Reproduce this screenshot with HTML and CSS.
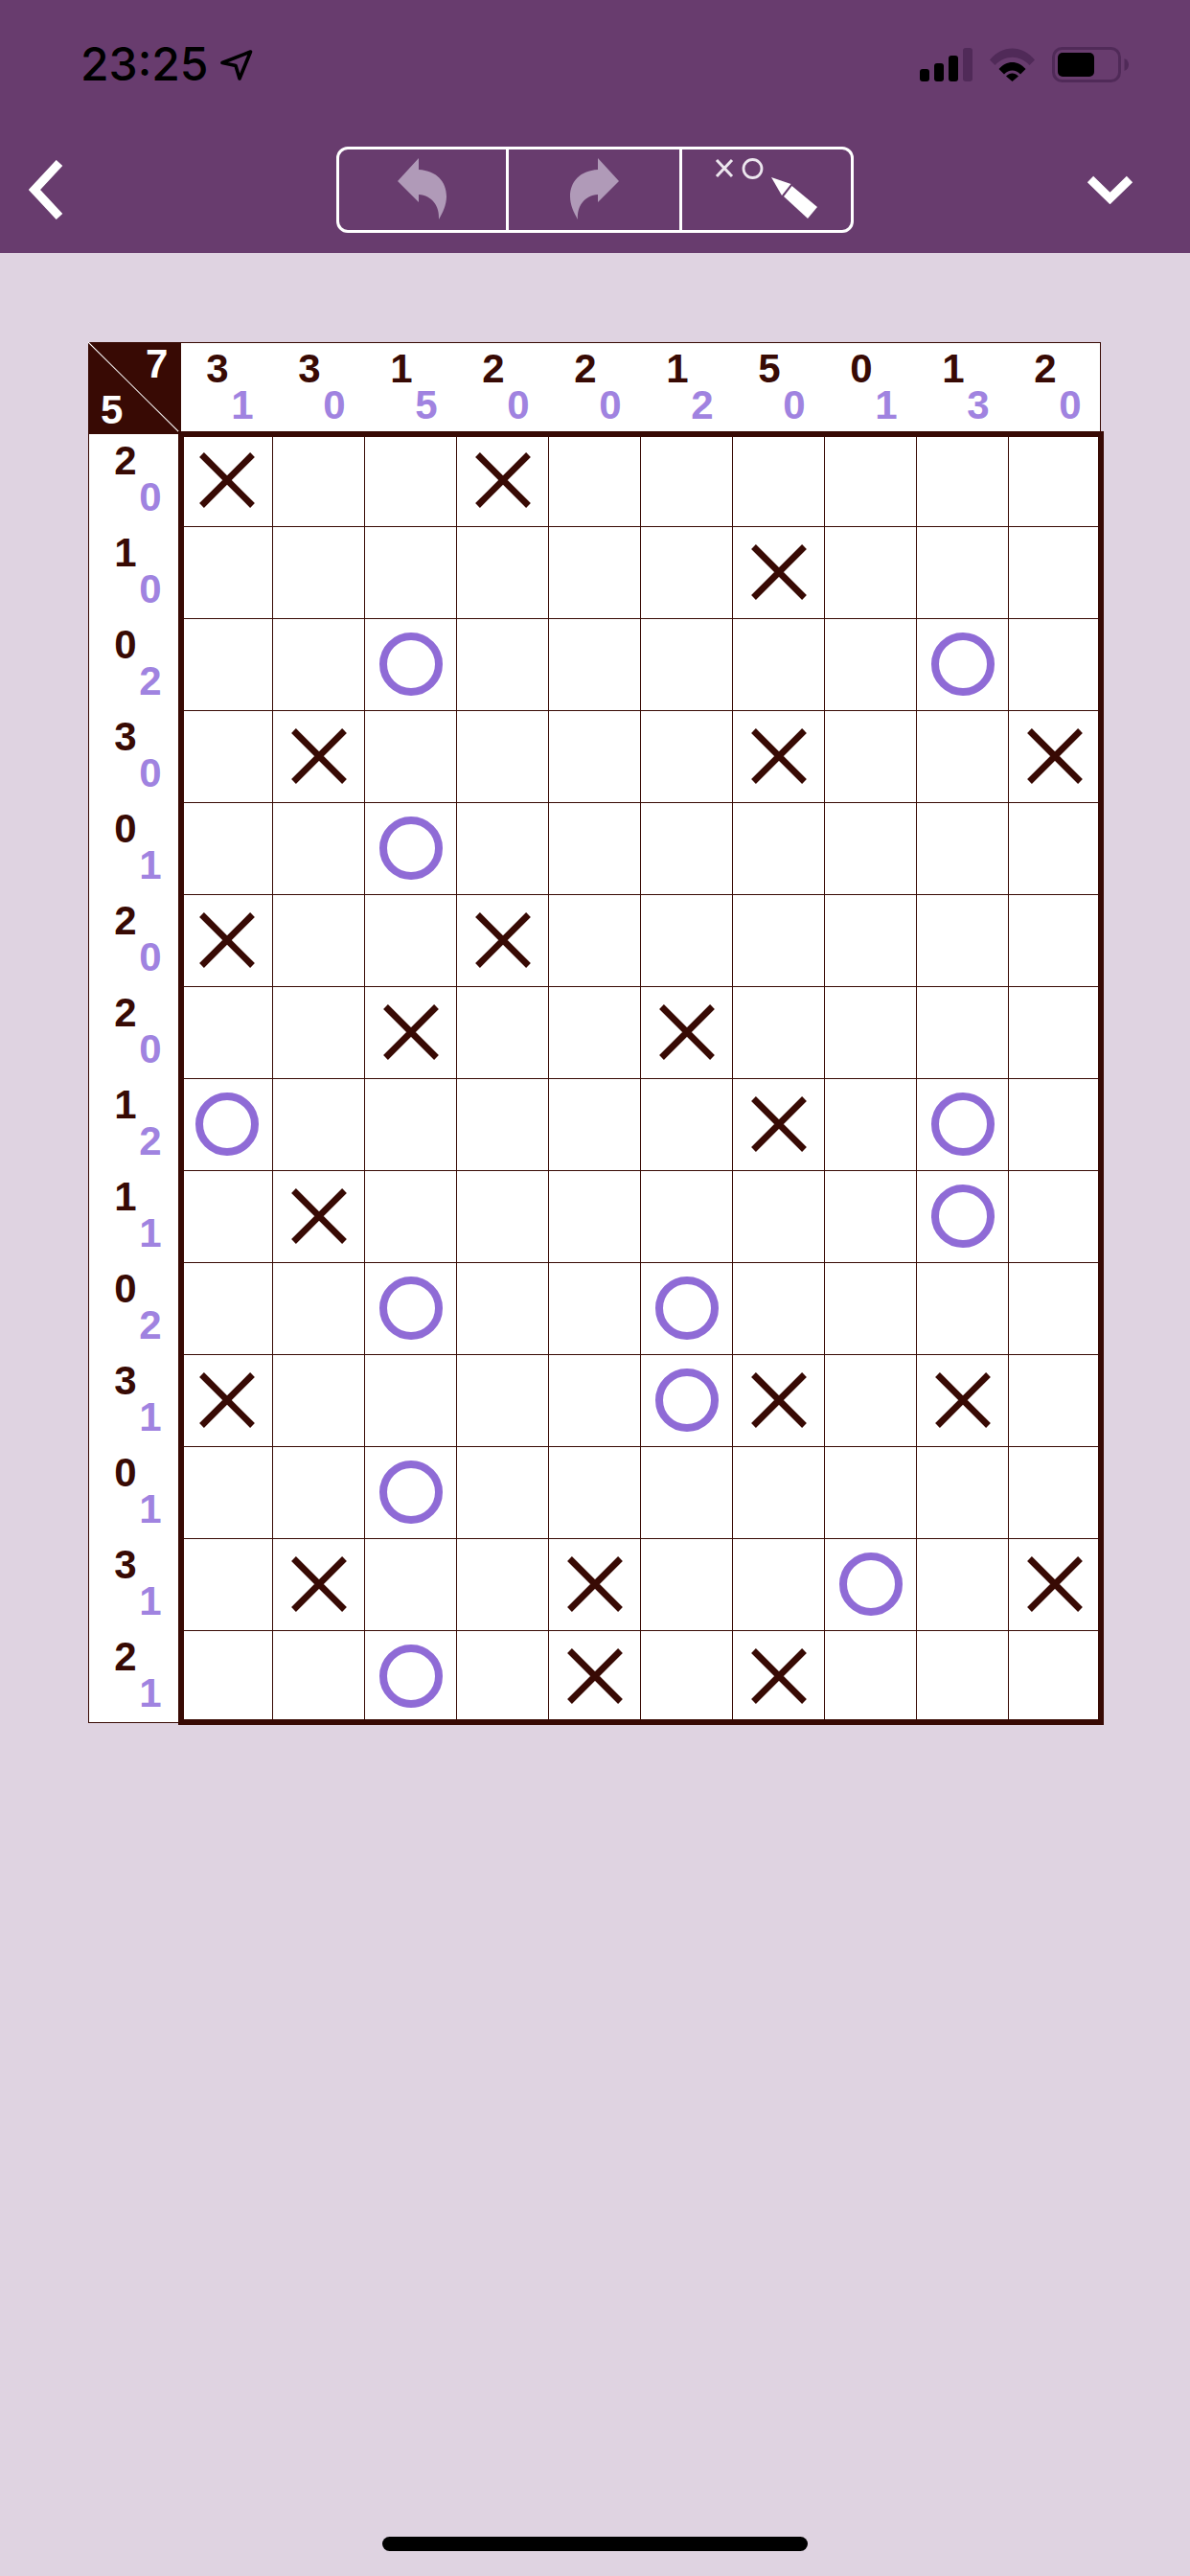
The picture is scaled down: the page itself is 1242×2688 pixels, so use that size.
FILE: index.html
```html
<!DOCTYPE html>
<html lang="en">
<head>
<meta charset="utf-8">
<title>Puzzle</title>
<link rel="stylesheet" href="styles.css">
</head>
<body>
<svg class="defs" width="0" height="0" aria-hidden="true">
  <symbol id="mx" viewBox="0 0 71 71"><path d="M9.500 8.500 62.500 61.500M62.500 8.500 9.500 61.500" fill="none" stroke="#380a04" stroke-width="6.800"/></symbol>
  <symbol id="mo" viewBox="0 0 71 71"><circle cx="36" cy="35" r="29" fill="none" stroke="#8f6bd6" stroke-width="8"/></symbol>
</svg>
<header class="top">
  <div class="status">
    <div class="clock">
      <span class="time">23:25</span>
      <svg class="loc" width="34" height="32" viewBox="0 0 34 32"><path d="M2 13.500 31.500 2 20 30 16 16.500Z" fill="none" stroke="#000" stroke-width="3.600" stroke-linejoin="round"/></svg>
    </div>
    <div class="sys">
      <svg class="signal" width="55" height="35" viewBox="0 0 55 35">
        <rect x="0" y="22" width="10" height="13" rx="3"/>
        <rect x="15" y="16" width="10" height="19" rx="3"/>
        <rect x="30" y="8" width="10" height="27" rx="3"/>
        <rect class="dim" x="45" y="0" width="10" height="35" rx="3"/>
      </svg>
      <svg class="wifi" width="47" height="35" viewBox="0 0 47 35">
        <path class="dim" d="M0 12.500C13 -3.500 34 -3.500 47 12.500L41.500 18C31 7 16 7 5.500 18Z"/>
        <path d="M9.500 22C17.500 12.500 29.500 12.500 37.500 22L32 27.500C27 22 20 22 15 27.500Z"/>
        <path d="M17 29.500C21 25.500 26 25.500 30 29.500L23.500 35Z"/>
      </svg>
      <svg class="batt" width="80" height="37" viewBox="0 0 80 37">
        <rect class="dim-line" x="1.500" y="1.500" width="69" height="34" rx="9"/>
        <rect x="6" y="6" width="38" height="25" rx="5"/>
        <path class="dim" d="M75.500 12C79 13.500 80 16 80 18.500S79 23.500 75.500 25Z"/>
      </svg>
    </div>
  </div>
  <nav class="nav">
    <button class="back" aria-label="Back">
      <svg width="36" height="62" viewBox="0 0 36 62"><path d="M32 3 6 31 32 59" fill="none" stroke="#fff" stroke-width="9"/></svg>
    </button>
    <div class="tools">
      <button class="tool undo" aria-label="Undo">
        <svg width="52" height="64" viewBox="0 0 52 64"><path d="M0 24 22 0V12C41 13 51 25 51 40 51 49 47 57 43 64 44 50 36 39 22 38V46Z" fill="#b09ab8"/></svg>
      </button>
      <button class="tool redo" aria-label="Redo">
        <svg width="52" height="64" viewBox="0 0 52 64"><path d="M52 24 30 0V12C11 13 1 25 1 40 1 49 5 57 9 64 8 50 16 39 30 38V46Z" fill="#b09ab8"/></svg>
      </button>
      <button class="tool mode" aria-label="Mark mode">
        <svg width="108" height="64" viewBox="0 0 108 64">
          <path d="M2 2 18 19M18 2 2 19" fill="none" stroke="#ece6ee" stroke-width="3"/>
          <circle cx="39.500" cy="11" r="9.500" fill="none" stroke="#ece6ee" stroke-width="2.800"/>
          <path d="M59 20 79.500 27 70 39Z" fill="#fff"/>
          <path d="M80.500 29 107 51 97 63 72 40Z" fill="#fff"/>
        </svg>
      </button>
    </div>
    <button class="more" aria-label="More">
      <svg width="49" height="30" viewBox="0 0 49 30"><path d="M4 4 24.500 24 45 4" fill="none" stroke="#fff" stroke-width="9"/></svg>
    </button>
  </nav>
</header>
<main class="board">
  <div class="corner"><span class="corner-top">7</span><span class="corner-bot">5</span></div>
  <div class="head">
    <div class="clue"><b>3</b><em>1</em></div>
    <div class="clue"><b>3</b><em>0</em></div>
    <div class="clue"><b>1</b><em>5</em></div>
    <div class="clue"><b>2</b><em>0</em></div>
    <div class="clue"><b>2</b><em>0</em></div>
    <div class="clue"><b>1</b><em>2</em></div>
    <div class="clue"><b>5</b><em>0</em></div>
    <div class="clue"><b>0</b><em>1</em></div>
    <div class="clue"><b>1</b><em>3</em></div>
    <div class="clue"><b>2</b><em>0</em></div>
  </div>
  <div class="side">
    <div class="clue"><b>2</b><em>0</em></div>
    <div class="clue"><b>1</b><em>0</em></div>
    <div class="clue"><b>0</b><em>2</em></div>
    <div class="clue"><b>3</b><em>0</em></div>
    <div class="clue"><b>0</b><em>1</em></div>
    <div class="clue"><b>2</b><em>0</em></div>
    <div class="clue"><b>2</b><em>0</em></div>
    <div class="clue"><b>1</b><em>2</em></div>
    <div class="clue"><b>1</b><em>1</em></div>
    <div class="clue"><b>0</b><em>2</em></div>
    <div class="clue"><b>3</b><em>1</em></div>
    <div class="clue"><b>0</b><em>1</em></div>
    <div class="clue"><b>3</b><em>1</em></div>
    <div class="clue"><b>2</b><em>1</em></div>
  </div>
  <div class="cells">
    <i><svg><use href="#mx"/></svg></i><i></i><i></i><i><svg><use href="#mx"/></svg></i><i></i><i></i><i></i><i></i><i></i><i></i>
    <i></i><i></i><i></i><i></i><i></i><i></i><i><svg><use href="#mx"/></svg></i><i></i><i></i><i></i>
    <i></i><i></i><i><svg><use href="#mo"/></svg></i><i></i><i></i><i></i><i></i><i></i><i><svg><use href="#mo"/></svg></i><i></i>
    <i></i><i><svg><use href="#mx"/></svg></i><i></i><i></i><i></i><i></i><i><svg><use href="#mx"/></svg></i><i></i><i></i><i><svg><use href="#mx"/></svg></i>
    <i></i><i></i><i><svg><use href="#mo"/></svg></i><i></i><i></i><i></i><i></i><i></i><i></i><i></i>
    <i><svg><use href="#mx"/></svg></i><i></i><i></i><i><svg><use href="#mx"/></svg></i><i></i><i></i><i></i><i></i><i></i><i></i>
    <i></i><i></i><i><svg><use href="#mx"/></svg></i><i></i><i></i><i><svg><use href="#mx"/></svg></i><i></i><i></i><i></i><i></i>
    <i><svg><use href="#mo"/></svg></i><i></i><i></i><i></i><i></i><i></i><i><svg><use href="#mx"/></svg></i><i></i><i><svg><use href="#mo"/></svg></i><i></i>
    <i></i><i><svg><use href="#mx"/></svg></i><i></i><i></i><i></i><i></i><i></i><i></i><i><svg><use href="#mo"/></svg></i><i></i>
    <i></i><i></i><i><svg><use href="#mo"/></svg></i><i></i><i></i><i><svg><use href="#mo"/></svg></i><i></i><i></i><i></i><i></i>
    <i><svg><use href="#mx"/></svg></i><i></i><i></i><i></i><i></i><i><svg><use href="#mo"/></svg></i><i><svg><use href="#mx"/></svg></i><i></i><i><svg><use href="#mx"/></svg></i><i></i>
    <i></i><i></i><i><svg><use href="#mo"/></svg></i><i></i><i></i><i></i><i></i><i></i><i></i><i></i>
    <i></i><i><svg><use href="#mx"/></svg></i><i></i><i></i><i><svg><use href="#mx"/></svg></i><i></i><i></i><i><svg><use href="#mo"/></svg></i><i></i><i><svg><use href="#mx"/></svg></i>
    <i></i><i></i><i><svg><use href="#mo"/></svg></i><i></i><i><svg><use href="#mx"/></svg></i><i></i><i><svg><use href="#mx"/></svg></i><i></i><i></i><i></i>
  </div>
</main>
<div class="home"></div>
</body>
</html>
```

FILE: styles.css
```css
* { box-sizing: border-box; }
html, body { margin: 0; padding: 0; }
body {
  width: 1242px;
  height: 2688px;
  background: #dfd3e1;
  font-family: "Liberation Sans", Arial, sans-serif;
  display: flex;
  flex-direction: column;
  overflow: hidden;
}
.defs { position: absolute; }

.top {
  height: 264px;
  flex: none;
  background: #683c6e;
}
.status {
  height: 153px;
  padding: 49px 64px 0 84px;
  display: flex;
  justify-content: space-between;
  align-items: flex-start;
}
.clock { display: flex; align-items: flex-start; gap: 13px; }
.time {
  font-family: Inter, "Liberation Sans", sans-serif;
  font-weight: 500;
  font-size: 48px;
  line-height: 60px;
  color: #000;
  margin-top: -12px;
}
.loc { margin-top: 3px; }
.sys { display: flex; align-items: flex-start; gap: 18px; }
.sys svg { display: block; fill: #000; }
.signal { margin-top: 1px; }
.wifi { margin-top: 1px; }
.dim { fill: #502a58; }
.dim-line { fill: none; stroke: #502a58; stroke-width: 3; }

.nav {
  height: 90px;
  display: grid;
  grid-template-columns: 1fr 540px 1fr;
  align-items: center;
}
.nav button { background: none; border: 0; padding: 0; display: flex; align-items: center; justify-content: center; }
.nav .back { justify-self: start; margin-left: 30px; }
.nav .more { justify-self: end; margin-right: 59px; }
.tools {
  height: 90px;
  border: 3px solid #fff;
  border-radius: 12px;
  display: flex;
}
.nav .tool { height: 84px; padding-bottom: 2px; }
.nav .undo { width: 174px; }
.nav .redo { width: 181px; }
.nav .mode { width: 179px; }
.nav .tool + .tool { border-left: 3px solid #fff; }

.board {
  margin: 93px 0 0 92px;
  width: 1058px;
  display: grid;
  grid-template-columns: 97px 960px;
  grid-template-rows: 96px 1344px;
  color: #380a04;
}
.corner {
  position: relative;
  background: linear-gradient(to top right, #380a04 calc(50% - 1px), #fff 50%, #380a04 calc(50% + 1px));
  color: #fff;
  font-size: 42px;
  font-weight: 700;
  line-height: 38px;
}
.corner-top { position: absolute; left: 60px; top: 4px; }
.corner-bot { position: absolute; left: 13px; top: 52px; }
.head {
  display: grid;
  grid-template-columns: repeat(10, 96px);
  background: #fff;
  border-top: 1px solid #380a04;
  border-right: 1px solid #380a04;
}
.side {
  background: #fff;
  border-left: 1px solid #380a04;
  border-bottom: 1px solid #380a04;
  height: 1345px;
}
.clue {
  height: 96px;
  padding-top: 9px;
  font-size: 42px;
  font-weight: 700;
  line-height: 38px;
}
.head .clue { padding-top: 8px; }
.clue b, .clue em {
  display: block;
  width: 24px;
  text-align: center;
  font-style: normal;
}
.clue b { margin-left: 26px; }
.clue em { margin-left: 52px; color: #a083e0; }

.cells {
  position: relative;
  display: grid;
  grid-template-columns: repeat(10, 96px);
  grid-auto-rows: 96px;
  background: #fff;
}
.cells::after {
  content: "";
  position: absolute;
  inset: -3px;
  border: 6px solid #380a04;
  pointer-events: none;
}
.cells i {
  display: flex;
  align-items: center;
  justify-content: center;
  border-right: 1px solid #380a04;
  border-top: 1px solid #380a04;
}
.cells svg { width: 71px; height: 71px; display: block; }

.home {
  position: absolute;
  left: 399px;
  top: 2647px;
  width: 444px;
  height: 15px;
  border-radius: 8px;
  background: #000;
}
```
